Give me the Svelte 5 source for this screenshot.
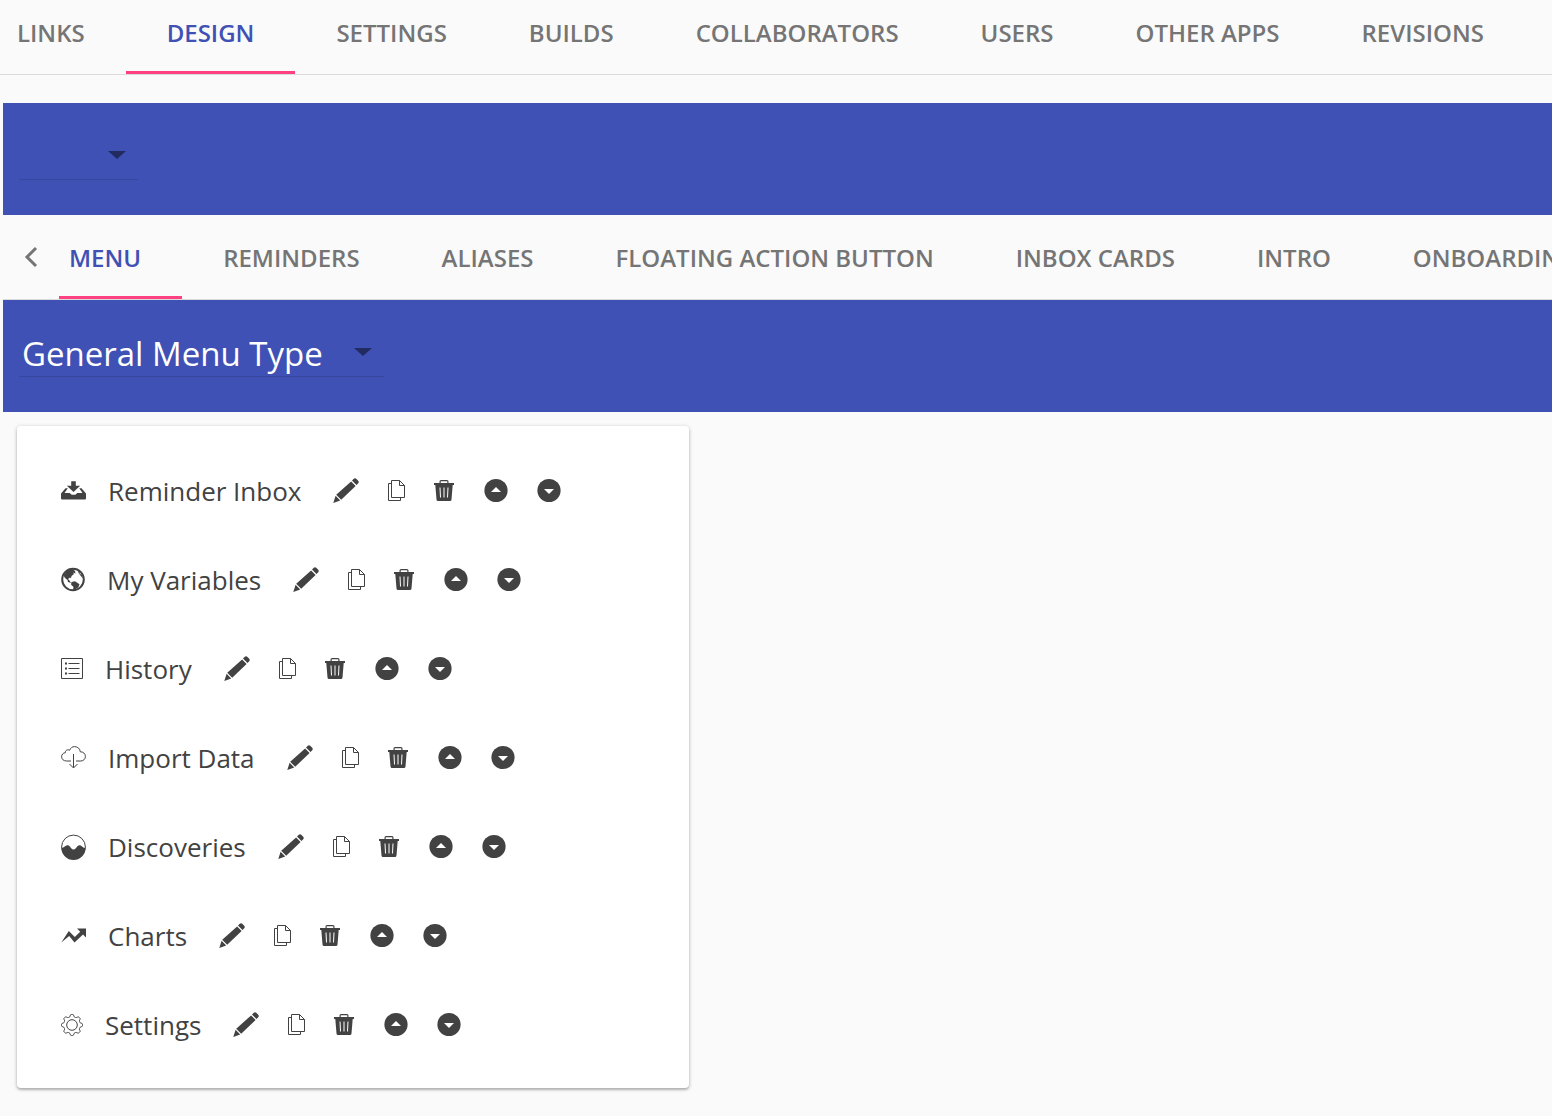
<script lang="ts">
  const sections = ['Links', 'Design', 'Settings', 'Builds', 'Collaborators', 'Users', 'Other Apps', 'Revisions'];
  const designTabs = ['Menu', 'Reminders', 'Aliases', 'Floating Action Button', 'Inbox Cards', 'Intro', 'Onboarding'];
  const items = [
    { icon: 'inbox', label: 'Reminder Inbox' },
    { icon: 'globe', label: 'My Variables' },
    { icon: 'list', label: 'History' },
    { icon: 'cloud', label: 'Import Data' },
    { icon: 'waves', label: 'Discoveries' },
    { icon: 'chart', label: 'Charts' },
    { icon: 'gear', label: 'Settings' }
  ];
  const actions = [
    { icon: 'pencil', label: 'Edit' },
    { icon: 'copy', label: 'Duplicate' },
    { icon: 'trash', label: 'Delete' },
    { icon: 'up', label: 'Move up' },
    { icon: 'down', label: 'Move down' }
  ];
  const gearTeeth = 8;
  const gearPath = (() => {
    const points: string[] = [];
    const steps = 96;
    for (let i = 0; i < steps; i++) {
      const a = (i / steps) * Math.PI * 2;
      const wave = Math.tanh(2.2 * Math.cos(gearTeeth * (a + Math.PI / 8))) / Math.tanh(2.2);
      const r = 9.4 + 1.1 * wave;
      points.push(`${(11 + r * Math.cos(a + Math.PI / 8)).toFixed(2)} ${(11 + r * Math.sin(a + Math.PI / 8)).toFixed(2)}`);
    }
    return `M${points.join('L')}Z`;
  })();
  let section = $state('Design');
  let designTab = $state('Menu');
</script>

{#snippet glyph(name: string)}
  {#if name === 'inbox'}
    <svg width="25" height="26" viewBox="0 0 25 26" aria-hidden="true">
      <path d="M10.200 3.300h4.600v4.500h4.400L12.500 14 5.800 7.800h4.400z" />
      <path d="M4.500 10.200h2.300L3.500 15h5.200l2 1.800h3.600l2-1.800h5.200l-3.300-4.800h2.300L25 15.500v5q0 1-1 1H1q-1 0-1-1v-5z" />
    </svg>
  {:else if name === 'globe'}
    <svg width="24" height="26" viewBox="0 0 24 26" aria-hidden="true">
      <circle cx="12" cy="12.500" r="10.800" class="line ring" />
      <path d="M11.500 2 6 4 2.500 8.500 4 11l2.500 2 .5 2 3 1-1.500-2.500L7 12l2-1.500 1 .8.500-2.300L13 7l-1-1.500 2.500 1L14 4zM10.500 15l3.500-.8 4.500 3-1 2.800-3.500 3h-2l.5-3-2.500-2.500z" />
      <path d="M17 3.500 19 5l-.5 1.500L21 8l1 3-1-.5L17.500 6z" />
    </svg>
  {:else if name === 'list'}
    <svg width="22" height="26" viewBox="0 0 22 26" aria-hidden="true">
      <path class="line" d="M.5 2.500h21v20H.5zM7.500 7.500h11M7.500 12.500h11M7.500 17.500h11" />
      <path d="M4 6.500h2v2H4zM4 11.500h2v2H4zM4 16.500h2v2H4z" />
    </svg>
  {:else if name === 'cloud'}
    <svg width="25" height="26" viewBox="0 0 25 26" aria-hidden="true">
      <path class="line" d="M10 16H5.500C2.500 16 .6 14 .6 11.800c0-2.300 1.500-3.900 3.700-4.100-.2-2.400 2.500-3.700 4.300-2.400C9.500 3 11.300 1.600 13.600 1.600c3 0 5.400 2.100 5.700 5.200 2.900-.1 5.100 1.900 5.100 4.600 0 2.600-2 4.600-4.600 4.600H15M12.500 9v13.500M8.500 19l4 4 4-4" />
    </svg>
  {:else if name === 'waves'}
    <svg width="25" height="26" viewBox="0 0 25 26" aria-hidden="true">
      <circle cx="12.500" cy="13" r="11.900" class="line" />
      <path d="M.5 14c2.500-.2 3.500-1.800 5-2.400 2-1 3.200.6 4.500 2.400q2.500 3 5 0c1.500-1.800 2.800-3.500 4.700-2.400 1.500 1 2.300 2.400 4.800 2.400a12 12 0 0 1-24 0z" />
    </svg>
  {:else if name === 'chart'}
    <svg width="25" height="26" viewBox="0 0 25 26" aria-hidden="true">
      <path d="M.3 19.500 7.800 8l6 6 5.400-5.200L16 5.500h9v9l-3-3-8.500 8L8.200 13z" />
    </svg>
  {:else if name === 'gear'}
    <svg width="22" height="26" viewBox="0 -2 22 26" aria-hidden="true">
      <path class="line" d={gearPath} />
      <circle class="line" cx="11" cy="11" r="5.300" />
    </svg>
  {:else if name === 'pencil'}
    <svg width="26" height="26" viewBox="0 0 26 26" aria-hidden="true">
      <path d="m19 2.500 1.500-1.500Q22-.5 23.500 1L25 2.500q1.500 1.500 0 3L23.500 7zM18.100 3.400l4.500 4.500L8.200 21.800l-5-5zM2.600 17.800l4.600 4.600L.3 25z" />
    </svg>
  {:else if name === 'copy'}
    <svg width="17" height="26" viewBox="0 0 17 26" aria-hidden="true">
      <path class="line" d="M3.500 2.500h8l5 5v12h-13zM11.500 2.500v5h5M3.500 5.500h-3v17h12v-3" />
    </svg>
  {:else if name === 'trash'}
    <svg width="21" height="26" viewBox="0 0 21 26" aria-hidden="true">
      <path d="M0 5h5.500V3.500Q5.500 2 7 2h6q1.500 0 1.500 1.500V5H20v2h-1.300l-1.200 14.500Q17.300 23 16 23H4q-1.300 0-1.500-1.500L1.300 7H0zm6.700 0h6.600V3.200H6.700z" fill-rule="evenodd" />
      <path class="cut" d="m6 9.500.5 10M10 9.500v10M14 9.500l-.5 10" />
    </svg>
  {:else}
    <svg width="24" height="26" viewBox="0 0 24 26" aria-hidden="true">
      <circle cx="12" cy="12.500" r="11.600" />
      <path class="hole" d={name === 'up' ? 'm12 9 5 5H7z' : 'm12 16-5-5h10z'} />
    </svg>
  {/if}
{/snippet}

{#snippet caret()}
  <svg class="caret" width="18" height="12" viewBox="0 0 18 12" aria-hidden="true"><path d="M0 0h18L9 8z" /></svg>
{/snippet}

<nav class="tabs" aria-label="App sections">
  {#each sections as name}
    <button type="button" class:active={section === name} onclick={() => (section = name)}>{name}</button>
  {/each}
</nav>

<main>
  <div class="toolbar">
    <label class="picker small">
      <select aria-label="App"><option></option></select>
      {@render caret()}
    </label>
  </div>

  <nav class="tabs inner" aria-label="Design">
    <button type="button" class="back" aria-label="Previous tabs">
      <svg width="14" height="22" viewBox="0 0 14 22" aria-hidden="true"><path d="m12 2-9 9 9 9" /></svg>
    </button>
    {#each designTabs as name}
      <button type="button" class:active={designTab === name} onclick={() => (designTab = name)}>{name}</button>
    {/each}
  </nav>

  <div class="toolbar">
    <label class="picker">
      <select aria-label="Menu type"><option>General Menu Type</option></select>
      {@render caret()}
    </label>
  </div>

  <ul class="card">
    {#each items as item}
      <li>
        {@render glyph(item.icon)}
        <span>{item.label}</span>
        <div class="actions">
          {#each actions as action}
            <button type="button" aria-label="{action.label} {item.label}">{@render glyph(action.icon)}</button>
          {/each}
        </div>
      </li>
    {/each}
  </ul>
</main>

<style>
  :global(body) {
    background: #fafafa;
    color: #424242;
    font-family: 'Open Sans', 'Noto Sans', sans-serif;
    overflow-x: hidden;
  }
  button {
    border: 0;
    padding: 0;
    background: none;
    color: inherit;
    font: inherit;
    cursor: pointer;
  }
  svg {
    display: block;
    flex: none;
    fill: currentColor;
  }
  .line {
    fill: none;
    stroke: currentColor;
    stroke-width: 1;
  }
  .ring {
    stroke-width: 2;
  }
  .cut {
    fill: none;
    stroke: #fff;
    stroke-width: 1;
  }
  .hole {
    fill: #fff;
  }
  .tabs {
    display: flex;
    height: 74px;
    overflow: hidden;
    border-bottom: 1px solid #dadada;
    color: #757575;
  }
  .tabs button {
    flex: none;
    padding: 0 41px 6px;
    border-bottom: 3px solid transparent;
    font-size: 24px;
    font-weight: 600;
    line-height: 32px;
    text-transform: uppercase;
    white-space: nowrap;
  }
  .tabs button:first-child {
    padding-left: 17px;
  }
  .tabs .active {
    border-color: #ff4081;
    color: #3f51b5;
  }
  main {
    padding: 28px 0 28px 3px;
  }
  .tabs.inner {
    height: 84px;
  }
  .tabs.inner button {
    padding-top: 4px;
    padding-bottom: 0;
  }
  .tabs.inner .back {
    padding: 2px 21px 0;
  }
  .tabs.inner .back + button {
    padding-left: 10px;
  }
  .back path {
    fill: none;
    stroke: currentColor;
    stroke-width: 3;
  }
  .toolbar {
    display: flex;
    align-items: flex-start;
    height: 80px;
    padding: 32px 16px 0;
    background: #3f51b5;
  }
  .picker {
    display: grid;
    align-items: center;
    width: 365px;
    height: 44px;
    border-bottom: 1px solid #37479d;
  }
  .picker.small {
    width: 119px;
  }
  .picker > :global(*) {
    grid-area: 1 / 1;
  }
  select {
    width: 100%;
    height: 44px;
    padding: 0 3px;
    border: 0;
    appearance: none;
    background: none;
    color: #fff;
    font: 33px/44px 'Open Sans', 'Noto Sans', sans-serif;
  }
  .caret {
    justify-self: end;
    margin-right: 12px;
    color: #222b60;
    pointer-events: none;
  }
  .card {
    width: 672px;
    box-sizing: border-box;
    margin: 14px;
    padding: 20px 44px 19px;
    border-radius: 4px;
    background: #fff;
    box-shadow: 0 1px 4px rgb(0 0 0 / 24%), 0 2px 2px rgb(0 0 0 / 16%);
    list-style: none;
  }
  li {
    display: flex;
    align-items: center;
    height: 89px;
    font-size: 26px;
    line-height: 36px;
  }
  li span {
    margin: 0 32px 0 22px;
  }
  .actions {
    display: flex;
    gap: 29px;
  }
</style>
